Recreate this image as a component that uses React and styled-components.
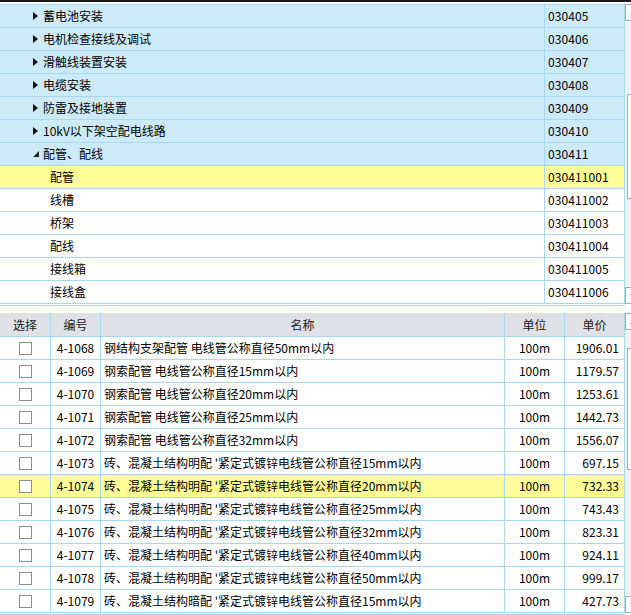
import React from "react";
import styled, { createGlobalStyle } from "styled-components";

const LINE = "#a9d7f0";
const BLUE_ROW = "#cdeaf8";
const YELLOW = "#fffd98";
const HEAD_BG = "#dee1e6";

const GlobalStyle = createGlobalStyle`
  html, body {
    margin: 0;
    padding: 0;
    background: #fff;
    overflow: hidden;
  }
  body {
    font-family: "Noto Sans CJK SC", "Noto Sans", sans-serif;
    font-size: 12px;
    color: #000;
  }
`;

const Page = styled.div`
  width: 631px;
  height: 615px;
  overflow: hidden;
  border-top: 2px solid #1c1c1c;
  box-sizing: border-box;
  display: flex;
  flex-direction: column;
`;

const Section = styled.div`
  display: flex;
  align-items: flex-start;
  margin-top: ${props => props.$gap}px;
`;

const Body = styled.div`
  width: 625px;
  flex: none;
  border-bottom: 1px solid ${LINE};
  padding-bottom: 1px;
`;

const TreeGrid = styled.div`
  display: grid;
  grid-template-columns: 545px 80px;
  border-top: 1px solid ${LINE};
`;

const rowBg = kind =>
  kind === "selected" ? YELLOW : kind === "parent" ? BLUE_ROW : "#fff";

const TreeCell = styled.div`
  height: 22px;
  border-bottom: 1px solid ${LINE};
  border-right: 1px solid ${LINE};
  background: ${props => rowBg(props.$kind)};
  display: flex;
  align-items: center;
  padding-left: ${props => props.$indent}px;
  line-height: 22px;
  white-space: nowrap;
  overflow: hidden;
`;

const Arrow = styled.span`
  width: 6px;
  margin-right: 4px;
  display: inline-flex;
  align-items: center;
  justify-content: flex-start;
`;

const Code = styled.span`
  font-size: 12px;
  letter-spacing: 0.1px;
`;

const TableGrid = styled.div`
  display: grid;
  grid-template-columns: 51px 50px 404px 60px 60px;
`;

const HeadCell = styled.div`
  height: 23px;
  border-bottom: 1px solid ${LINE};
  border-right: 1px solid ${LINE};
  background: ${HEAD_BG};
  display: flex;
  align-items: center;
  justify-content: center;
  line-height: 23px;
  color: #1a1a1a;
`;

const Cell = styled.div`
  height: 22px;
  border-bottom: 1px solid ${LINE};
  border-right: 1px solid ${LINE};
  background: ${props => (props.$selected ? YELLOW : "#fff")};
  display: flex;
  align-items: center;
  justify-content: ${props =>
    props.$align === "right" ? "flex-end" : props.$align === "left" ? "flex-start" : "center"};
  padding: 0 ${props => (props.$align === "right" ? 5 : 0)}px 0
    ${props => (props.$align === "left" ? 3 : 0)}px;
  line-height: 22px;
  white-space: nowrap;
  overflow: hidden;
`;

const Checkbox = styled.span`
  width: 13px;
  height: 13px;
  box-sizing: border-box;
  border: 1px solid #8c8c8c;
  background: #fff;
  margin-left: 1px;
`;

const ScrollBar = styled.div`
  width: 17px;
  flex: none;
  height: ${props => props.$height}px;
  display: flex;
  flex-direction: column;
  background: #f1f1f1;
`;

const ScrollButton = styled.div`
  height: 17px;
  flex: none;
  box-sizing: border-box;
  border: 1px solid #a9a9a9;
  background: #fbfbfb;
  display: flex;
  align-items: center;
  justify-content: center;
`;

const ScrollThumb = styled.div`
  flex: none;
  margin-left: 2px;
  box-sizing: border-box;
  border: 1px solid #a9a9a9;
  background: #fdfdfd;
`;

const ScrollFill = styled.div`
  flex: 1;
`;

const treeRows = [
  { label: "蓄电池安装", code: "030405", kind: "parent" },
  { label: "电机检查接线及调试", code: "030406", kind: "parent" },
  { label: "滑触线装置安装", code: "030407", kind: "parent" },
  { label: "电缆安装", code: "030408", kind: "parent" },
  { label: "防雷及接地装置", code: "030409", kind: "parent" },
  { label: "10kV以下架空配电线路", code: "030410", kind: "parent" },
  { label: "配管、配线", code: "030411", kind: "parent", open: true },
  { label: "配管", code: "030411001", kind: "selected" },
  { label: "线槽", code: "030411002", kind: "child" },
  { label: "桥架", code: "030411003", kind: "child" },
  { label: "配线", code: "030411004", kind: "child" },
  { label: "接线箱", code: "030411005", kind: "child" },
  { label: "接线盒", code: "030411006", kind: "child" },
];

const mingPei = "砖、混凝土结构明配 '紧定式镀锌电线管公称直径";

const quotaRows = [
  { no: "4-1068", name: "钢结构支架配管 电线管公称直径50mm以内", price: "1906.01" },
  { no: "4-1069", name: "钢索配管 电线管公称直径15mm以内", price: "1179.57" },
  { no: "4-1070", name: "钢索配管 电线管公称直径20mm以内", price: "1253.61" },
  { no: "4-1071", name: "钢索配管 电线管公称直径25mm以内", price: "1442.73" },
  { no: "4-1072", name: "钢索配管 电线管公称直径32mm以内", price: "1556.07" },
  { no: "4-1073", name: mingPei + "15mm以内", price: "697.15" },
  { no: "4-1074", name: mingPei + "20mm以内", price: "732.33", selected: true },
  { no: "4-1075", name: mingPei + "25mm以内", price: "743.43" },
  { no: "4-1076", name: mingPei + "32mm以内", price: "823.31" },
  { no: "4-1077", name: mingPei + "40mm以内", price: "924.11" },
  { no: "4-1078", name: mingPei + "50mm以内", price: "999.17" },
  { no: "4-1079", name: "砖、混凝土结构暗配 '紧定式镀锌电线管公称直径15mm以内", price: "427.73" },
];

const ClosedArrow = () => (
  <svg width="5" height="8" viewBox="0 0 5 8">
    <polygon points="0,0 5,4 0,8" fill="#111" />
  </svg>
);

const OpenArrow = () => (
  <svg width="6" height="6" viewBox="0 0 6 6">
    <polygon points="6,0 6,6 0,6" fill="#222" />
  </svg>
);

const UpGlyph = () => (
  <svg width="7" height="4" viewBox="0 0 7 4">
    <polygon points="0,4 3.5,0 7,4" fill="#606060" />
  </svg>
);

const DownGlyph = () => (
  <svg width="7" height="4" viewBox="0 0 7 4">
    <polygon points="0,0 3.5,4 7,0" fill="#606060" />
  </svg>
);

const Scroller = ({ height, thumbTop, thumbHeight }) => (
  <ScrollBar $height={height}>
    <ScrollButton><UpGlyph /></ScrollButton>
    <ScrollThumb style={{ marginTop: thumbTop, height: thumbHeight }} />
    <ScrollFill />
    <ScrollButton><DownGlyph /></ScrollButton>
  </ScrollBar>
);

export default function App() {
  return (
    <>
      <GlobalStyle />
      <Page>
        <Section $gap={2}>
          <Body>
            <TreeGrid>
              {treeRows.map(row => (
                <React.Fragment key={row.code}>
                  <TreeCell $kind={row.kind} $indent={row.kind === "parent" ? 33 : 50}>
                    {row.kind === "parent" && (
                      <Arrow>{row.open ? <OpenArrow /> : <ClosedArrow />}</Arrow>
                    )}
                    {row.label}
                  </TreeCell>
                  <TreeCell $kind={row.kind} $indent={3}>
                    <Code>{row.code}</Code>
                  </TreeCell>
                </React.Fragment>
              ))}
            </TreeGrid>
          </Body>
          <Scroller height={300} thumbTop={73} thumbHeight={105} />
        </Section>

        <Section $gap={7}>
          <Body>
            <TableGrid>
              <HeadCell>选择</HeadCell>
              <HeadCell>编号</HeadCell>
              <HeadCell>名称</HeadCell>
              <HeadCell>单位</HeadCell>
              <HeadCell>单价</HeadCell>
              {quotaRows.map(row => (
                <React.Fragment key={row.no}>
                  <Cell $selected={row.selected}><Checkbox /></Cell>
                  <Cell $selected={row.selected}>{row.no}</Cell>
                  <Cell $selected={row.selected} $align="left">{row.name}</Cell>
                  <Cell $selected={row.selected}>100m</Cell>
                  <Cell $selected={row.selected} $align="right">{row.price}</Cell>
                </React.Fragment>
              ))}
            </TableGrid>
          </Body>
          <Scroller height={300} thumbTop={18} thumbHeight={122} />
        </Section>
      </Page>
    </>
  );
}
